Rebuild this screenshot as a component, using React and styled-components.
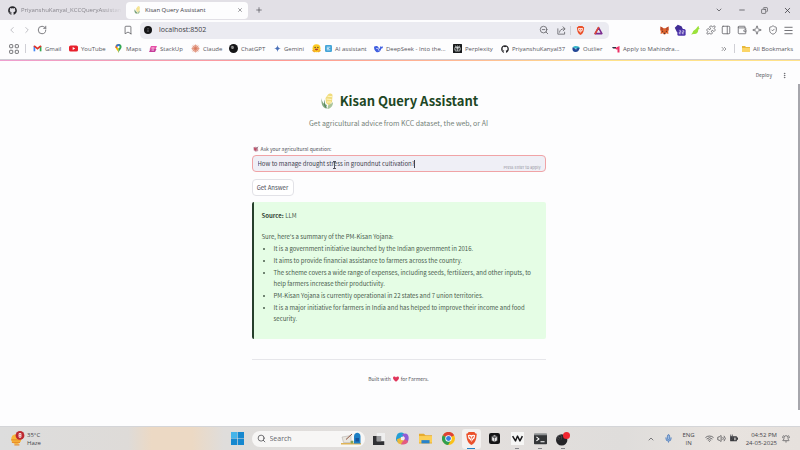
import React from "react";
import styled, { createGlobalStyle, css } from "styled-components";
import {
  BellRing, Bookmark, ChevronDown, ChevronLeft, ChevronRight, ChevronUp, ChevronsRight,
  Copy, Menu, Mic, Minus, MoreVertical, PanelRight, Plus, Puzzle, RotateCw,
  Search, ShieldCheck, Sparkle, Volume2, Wallet, Wifi, X, ZoomOut,
} from "lucide-react";
import { FaGithub } from "react-icons/fa";
import { SiOpenai, SiObsstudio } from "react-icons/si";

const GlobalStyle = createGlobalStyle`
  * { box-sizing: border-box; }
  body { margin: 0; background: #fdfdfe; }
  button, input { font: inherit; color: inherit; }
  button { border: 0; padding: 0; background: none; display: flex; align-items: center; justify-content: center; }
  a { color: inherit; text-decoration: none; }
  svg { display: block; flex: none; }
`;

const Screen = styled.div`
  min-height: 100vh;
  display: flex;
  flex-direction: column;
  font-family: "Open Sans", "Noto Sans", sans-serif;
  font-size: 6px;
  line-height: 10px;
  color: #4a4a50;
`;

/* ---------- browser window ---------- */
const TabStrip = styled.div`
  height: 20px;
  background: #e2e0e6;
  display: flex;
  align-items: center;
  padding-right: 1px;
`;
const Tab = styled.button`
  height: 17px;
  gap: 4px;
  white-space: nowrap;
  ${(p) => p.$active
    ? css`width: 122px; background: #fdfdfe; border-radius: 4px; padding: 0 5px 0 7px; justify-content: flex-start; color: #404046;`
    : css`width: 126px; padding: 0 4px 0 8px; justify-content: flex-start; color: #88868d;`}
`;
const TabTitle = styled.span`
  flex: 1;
  text-align: left;
  ${(p) => p.$fade && css`mask-image: linear-gradient(90deg, #000 80%, transparent);`}
`;
const NewTab = styled.button`width: 22px; height: 16px;`;
const Spacer = styled.div`flex: 1;`;
const WindowButton = styled.button`width: 23px; height: 16px; color: #38383d;`;

const Toolbar = styled.div`
  height: 20px;
  display: flex;
  align-items: center;
  padding: 0 4px 0 5px;
  background: #fdfdfe;
`;
const ToolButton = styled.button`
  width: ${(p) => p.$w || 16}px;
  height: 16px;
  color: ${(p) => p.$color || "#66666b"};
`;
const SaveButton = styled(ToolButton)`margin-left: auto; margin-right: 4px;`;
const NavGroup = styled.div`width: 135px; display: flex; align-items: center;`;
const Address = styled.form`
  flex: 1;
  max-width: 469px;
  height: 17px;
  border-radius: 5px;
  background: #ebebf1;
  display: flex;
  align-items: center;
  padding: 0 2px 0 4px;
`;
const AddressInput = styled.input`
  flex: 1;
  min-width: 0;
  border: 0;
  background: none;
  outline: none;
  padding: 0 0 0 7px;
  font-size: 7px;
  color: #404046;
`;
const Divider = styled.i`width: 1px; height: 9px; background: #cfcfd5;`;
const Extensions = styled.div`margin-left: auto; display: flex; align-items: center;`;

const BookmarkBar = styled.nav`
  height: 20px;
  display: flex;
  align-items: center;
  padding: 0 7px 2px 9px;
  border-bottom: 1px solid #cdccd3;
  white-space: nowrap;
  color: #56565c;
`;
const Apps = styled.button`width: 16px; height: 14px; justify-content: flex-start; color: #66666b;`;
const BookmarkLink = styled.a`
  width: ${(p) => p.$w}px;
  display: flex;
  align-items: center;
  gap: 3px;
`;
const BarStart = styled.div`width: 24px; display: flex; align-items: center;`;
const AllBookmarks = styled.a`display: flex; align-items: center; gap: 3px; margin-left: 7px;`;

/* ---------- page ---------- */
const Page = styled.main`
  flex: 1;
  display: flex;
  flex-direction: column;
  position: relative;
  background: #fdfdfe;
  font-family: "Noto Sans CJK SC", sans-serif;
  padding-right: 3px;
`;
const Rainbow = styled.div`
  height: 1px;
  margin-right: -3px;
  background: linear-gradient(90deg, #ee9fd0, #ff9a94 35%, #ffbd94 60%, #ffe28a 75%);
`;
const PageHeader = styled.header`
  height: 28px;
  display: flex;
  justify-content: flex-end;
  align-items: center;
  gap: 6px;
  padding-right: 7px;
  font-size: 5px;
`;
const Deploy = styled.button`font-size: 5px; color: #55565c;`;
const ScrollThumb = styled.div`
  position: absolute;
  right: 0;
  top: 24px;
  bottom: 16px;
  width: 2px;
  background: #a6a6ac;
`;
const Column = styled.div`
  width: 294px;
  margin: 0 auto;
  display: flex;
  flex-direction: column;
`;
const Title = styled.h1`
  margin: 2px 0 0;
  display: flex;
  align-items: center;
  justify-content: center;
  gap: 5px;
  font-size: 13px;
  line-height: 20px;
  font-weight: 700;
  color: #1e4725;
`;
const Subtitle = styled.p`
  margin: 7px 0 0;
  text-align: center;
  font-size: 7px;
  line-height: 10px;
  color: #758279;
`;
const Label = styled.label`
  margin-top: 16px;
  display: flex;
  align-items: center;
  gap: 2px;
  padding-left: 1px;
  font-size: 5px;
  line-height: 10px;
  color: #505159;
`;
const Field = styled.div`
  position: relative;
  margin-top: 1px;
  height: 17px;
  border: 1px solid #f0a3a6;
  border-radius: 4px;
  background: #efeff6;
  display: flex;
`;
const Question = styled.input`
  flex: 1;
  min-width: 0;
  border: 0;
  outline: none;
  background: none;
  padding: 0 5px;
  font-size: 6px;
  color: #42434f;
`;
const Hint = styled.span`
  position: absolute;
  right: 4px;
  bottom: 0;
  font-size: 4px;
  line-height: 8px;
  color: #9494a0;
`;
const TextCaret = styled.i`
  position: absolute;
  left: 161px;
  top: 4px;
  width: 1px;
  height: 8px;
  background: #42434f;
`;
const Pointer = styled.svg`
  position: absolute;
  left: 79px;
  top: 5px;
`;
const Submit = styled.button`
  align-self: flex-start;
  margin-top: 7px;
  width: 42px;
  height: 17px;
  border: 1px solid #e2e2e7;
  border-radius: 4px;
  background: #fff;
  font-size: 6px;
  color: #4b4c55;
`;
const Answer = styled.section`
  margin-top: 6px;
  padding: 8px 10px 15px 8px;
  border-left: 2px solid #26402b;
  border-radius: 2px;
  background: #e5fde5;
  font-size: 6px;
  line-height: 11px;
  color: #4a5c4d;
`;
const Line = styled.p`margin: 0 0 ${(p) => p.$gap || 0}px;`;
const Strong = styled.b`color: #35483a;`;
const List = styled.ul`
  margin: 0;
  padding: 0 0 0 12px;
  list-style: none;
`;
const Item = styled.li`
  margin-top: 1px;
  position: relative;
  &::before {
    content: "";
    position: absolute;
    left: -11px;
    top: 5px;
    width: 2px;
    height: 2px;
    border-radius: 1px;
    background: #4a5c4d;
  }
`;
const Rule = styled.hr`
  width: 100%;
  margin: 20px 0 14px;
  border: 0;
  border-top: 1px solid #e6e6ea;
`;
const Footer = styled.footer`
  display: flex;
  justify-content: center;
  align-items: center;
  gap: 2px;
  font-size: 5px;
  line-height: 10px;
  color: #55565c;
`;

/* ---------- taskbar ---------- */
const Taskbar = styled.div`
  height: 24px;
  display: grid;
  grid-template-columns: 1fr auto 1fr;
  align-items: center;
  padding: 0 10px;
  border-top: 1px solid #d4d5d8;
  background: linear-gradient(90deg, #dddddd 0%, #dedbd8 16%, #ecd9c4 19%, #ecd9c4 24%, #dfdddb 28%, #e3dfdd 60%, #dfdddb 78%, #e8e3df 90%, #e6e1dd 100%);
  color: #45454a;
`;
const Weather = styled.button`
  justify-self: start;
  gap: 2px;
  text-align: left;
  line-height: 8px;
`;
const Pinned = styled.div`display: flex; align-items: center; margin-left: 5px;`;
const SearchBox = styled.label`
  width: 113px;
  height: 16px;
  margin: 0 3px 0 7px;
  padding: 0 3px 0 5px;
  border-radius: 8px;
  background: #f7f6f5;
  display: flex;
  align-items: center;
  gap: 4px;
`;
const SearchInput = styled.input`
  flex: 1;
  min-width: 0;
  border: 0;
  background: none;
  outline: none;
  padding: 0;
  font-size: 7px;
  &::placeholder { color: #68686d; opacity: 1; }
`;
const TaskButton = styled.button`
  width: 19px;
  height: 20px;
  margin: 0 2px;
  border-radius: 3px;
  position: relative;
  ${(p) => p.$active && css`background: #f3f1f0;`}
  ${(p) => p.$running && css`
    &::after {
      content: "";
      position: absolute;
      bottom: 0;
      left: 50%;
      width: ${p.$active ? 8 : 4}px;
      height: 1px;
      transform: translateX(-50%);
      background: ${p.$active ? "#2380c4" : "#85858a"};
    }
  `}
`;
const StartButton = styled.button`width: 14px; height: 20px;`;
const Tray = styled.div`justify-self: end; display: flex; align-items: center; gap: 3px; line-height: 8px;`;
const TrayText = styled.div`
  text-align: ${(p) => (p.$right ? "right" : "center")};
  margin: ${(p) => (p.$right ? "0 2px 0 5px" : "0 7px 0 6px")};
`;
const TrayIcon = styled.button`height: 16px; margin-right: ${(p) => p.$gap || 0}px;`;

/* ---------- drawings ---------- */
const Svg = ({ s = 9, v = 16, children, ...rest }) => (
  <svg width={s} height={s} viewBox={`0 0 ${v} ${v}`} fill="none" aria-hidden="true" {...rest}>{children}</svg>
);
const Corn = ({ s }) => (
  <Svg s={s}>
    <path d="M9 1.5c1-1.500 4-1.500 4.500.5l-.5 7-3 3.500-3-2.500L6.500 5z" fill="#f0dc7d" />
    <path d="M8.500 3.200l4.500.5M7.500 6l5 .5M8 9h4" stroke="#fff6c4" />
    <path d="M2.500 5c.5 4 2 6 5.500 7l-1 3.500C3.500 14.500 2 11 2.500 5z" fill="#86a983" />
    <path d="M6 6.500c-.5 4 .5 7 2.500 9.200-3-1-4.500-4-2.500-9.200z" fill="#53875c" />
    <path d="M14 9c-1 1.500-3 2-5 3.500L8.500 16c3.500-.5 5.500-3 5.500-7z" fill="#a9c49a" />
  </Svg>
);
const Gmail = () => (
  <Svg s={9}>
    <path d="M1 13V4h3v9z" fill="#4285f4" /><path d="M12 13V4h3v9z" fill="#34a853" />
    <path d="M1 4.500C1 2.500 3 2.200 4 3l4 3.200L12 3c1-.8 3-.5 3 1.500L8 10z" fill="#e0352b" />
  </Svg>
);
const YouTube = () => (
  <Svg s={9}><rect y="2.500" width="16" height="11" rx="3" fill="#e8202c" /><path d="M6.500 5.500v5L11 8z" fill="#fff" /></Svg>
);
const Maps = () => (
  <Svg s={9}>
    <path d="M8 0a5.500 5.500 0 0 0-5.500 5.500C2.500 9 7 11 8 16z" fill="#fbbc04" />
    <path d="M8 0a5.500 5.500 0 0 1 5.500 5.500C13.500 9 9 11 8 16z" fill="#34a853" />
    <path d="M8 0a5.500 5.500 0 0 0-5 3.500L6 6l5-5z" fill="#3a6fd8" /><path d="M3 3.500L2.600 7 6 6z" fill="#ea4335" />
    <circle cx="8" cy="5.500" r="2" fill="#fff" />
  </Svg>
);
const StackUp = () => (
  <Svg s={8}><path d="M4 2h12l-3 7H1z" fill="#e64fa6" /><path d="M3 8h12l-3 6H0z" fill="#c73c9a" /><path d="M5 6h6M5 10h5" stroke="#fff" strokeWidth="1.500" /></Svg>
);
const Claude = () => (
  <Svg s={9}><path d="M8 1v14M1 8h14M3 3l10 10M13 3L3 13M5.300 1.500l5.400 13M10.700 1.500l-5.400 13M1.500 5.300l13 5.400M1.500 10.700l13-5.400" stroke="#d9775b" strokeWidth="1.300" /></Svg>
);
const ChatGPT = () => (
  <Svg s={9}><circle cx="8" cy="8" r="8" fill="#151517" /><SiOpenai x="3" y="3" width="10" height="10" color="#fff" /></Svg>
);
const Gemini = () => <Svg s={7}><path d="M8 0c.6 5 3 7.400 8 8-5 .6-7.400 3-8 8-.6-5-3-7.400-8-8 5-.6 7.400-3 8-8z" fill="#4a70b8" /></Svg>;
const Hug = () => (
  <Svg s={9}><circle cx="8" cy="7.500" r="7" fill="#fcca22" /><circle cx="5.500" cy="6" r="1.100" fill="#3b3020" /><circle cx="10.500" cy="6" r="1.100" fill="#3b3020" /><path d="M5 8.500h6c0 4-6 4-6 0z" fill="#b33a35" /><path d="M1 11l4 3M15 11l-4 3" stroke="#f2a62b" strokeWidth="3" /></Svg>
);
const Assistant = () => (
  <Svg s={7}><rect width="16" height="16" rx="3" fill="#45a5d8" /><path d="M4 5h8M4 8h5M4 11h8" stroke="#e8f6ff" strokeWidth="1.800" /></Svg>
);
const DeepSeek = () => (
  <Svg s={9}><path d="M0 5c3-2 6-2 8 1 1 2 3 2 3-1 0-2 1-1 2 0 1 0 2 0 3-1 0 3-1 4-3 4-1 5-5 8-9 6C1 12 0 9 0 5z" fill="#405fe0" /><path d="M4 8c2-1 4 1 5 4" stroke="#fff" strokeWidth="1.300" /><circle cx="9" cy="8" r="1" fill="#fff" /></Svg>
);
const Perplexity = () => (
  <Svg s={9}><rect width="16" height="16" rx="1" fill="#17191b" /><path d="M8 2.500v11M4.500 3L8 6.500 11.500 3v3.500h-7zM3 6.500h10V11h-2M3 6.500V11h2M8 7l-3 3v3.500L8 11l3 2.500V10z" stroke="#e3e8e8" /></Svg>
);
const Outlier = () => (
  <Svg s={8}><path d="M1 5c3-4 9-4 14-1v4H9z" fill="#39b6c9" /><path d="M1 5c-1 5 1 9 6 9s7-3 8-8l-4-1c0 4-5 5-6 1z" fill="#234796" /></Svg>
);
const Mahindra = () => (
  <Svg s={8}><path d="M0 4h8v3H2z" fill="#2c3546" /><path d="M8 5l7-3v13h-4V8z" fill="#ee3166" /><path d="M4 6h7v4z" fill="#ee3166" /></Svg>
);
const Folder = ({ s = 9 }) => (
  <Svg s={s}><path d="M0 2h6l2 2h8v10H0z" fill="#e8b93c" /><path d="M0 6h16v8H0z" fill="#fbd567" /></Svg>
);
const Lion = ({ s = 9 }) => (
  <Svg s={s}><path d="M4.500 0h7L13 1.700l1.500.3-.5 4c-.7 6-3 8-6 10-3-2-5.300-4-6-10l-.5-4L3 1.700z" fill="#eb512b" /><path d="M3.500 4L6 3.500l2 .5 2-.5 2.500.5-.8 4-1.700 1.300L8 12l-2-2.700L4.300 8z" fill="#fff" /><path d="M5 5l2.300 1L7 8zM11 5L8.700 6 9 8zM8 8v3" fill="#eb512b" stroke="#eb512b" strokeWidth=".6" /></Svg>
);
const Triangle = () => (
  <Svg s={9}><path d="M8 3L2 13.500h12z" stroke="#7b2b8f" strokeWidth="2.800" strokeLinejoin="round" /><path d="M8 3L2 13.500" stroke="#e04934" strokeWidth="2.800" strokeLinecap="round" /></Svg>
);
const ShareArrow = () => (
  <Svg s={9} stroke="currentColor" strokeWidth="1.500" strokeLinecap="round" strokeLinejoin="round"><path d="M1.500 5v9.500h12V11" /><path d="M4.500 11c.5-4 3-6 9-6M10.500 1.500L14.500 5 11 8.500" /></Svg>
);
const Fox = () => (
  <Svg s={9}><path d="M1 1l5 3h4l5-3 .5 6-1 3 .5 4-4-1-2 2H7l-2-2-4 1 .5-4-1-3z" fill="#e1662f" /><path d="M1 1l5 3-1 4-4-1zM15 1l-5 3 1 4 4-1z" fill="#b94a2c" /><path d="M4 8l2 2-2 .5zM12 8l-2 2 2 .5z" fill="#31232a" /><path d="M6.500 12h3l-.5 2H7z" fill="#49383d" /></Svg>
);
const BadgeIcon = () => (
  <Svg s={12}><path d="M1 5l4-4 5 2 2 4-3 4H4z" fill="#402d94" /><rect x="4.500" y="6.500" width="11" height="9" rx="2" fill="#4c32aa" /><path d="M7 9h2v2H7v2h2M11 9h2v2h-2v2h2" stroke="#fff" strokeWidth=".8" /></Svg>
);
const Bird = () => (
  <Svg s={9}><path d="M0 15c2-1 3-4 4-6 2-3 5-3 7-7 1-2 3-2 3-1v3l2 1-3 1c0 6-4 9-8 8z" fill="#9be23b" /></Svg>
);
const AppGrid = () => (
  <Svg s={10} stroke="currentColor" strokeWidth="1.500"><rect x="1" y="1" width="5" height="5" rx="1" /><rect x="10" y="1" width="5" height="5" rx="1" /><rect x="1" y="10" width="5" height="5" rx="1" /><rect x="10" y="10" width="5" height="5" rx="1" /></Svg>
);
const SiteIcon = () => <Svg s={8}><circle cx="8" cy="8" r="8" fill="#151517" /><path d="M8 4v2M8 7v5" stroke="#8c8c92" strokeWidth="1.400" /></Svg>;
const Dart = () => (
  <Svg s={6}><path d="M1 3l6-1 6 2 1 9-7 2-5-3z" fill="#c899aa" /><path d="M3 4l7 3-2 6-5-3z" fill="#c24a61" /><path d="M7 8l7-6" stroke="#7f6875" strokeWidth="2" /></Svg>
);
const Heart = () => <Svg s={6}><path d="M8 15C3 11 0 8 0 5c0-4 6-5 8-1 2-4 8-3 8 1 0 3-3 6-8 10z" fill="#e0355b" /></Svg>;
const Haze = () => (
  <Svg s={15} v={24}><circle cx="10" cy="13" r="8" fill="#f8b739" /><path d="M2 14h15M3 18h13M7 22h8" stroke="#e88f2d" strokeWidth="2" /><circle cx="16" cy="7" r="7" fill="#bd2830" /><path d="M14.500 4h3v6h-3zM14.500 7h3" stroke="#fff" strokeWidth="1.300" /></Svg>
);
const Windows = () => (
  <Svg s={13}><path d="M0 0h7.600v7.600H0zM8.400 0H16v7.600H8.400zM0 8.400h7.600V16H0zM8.400 8.400H16V16H8.400z" fill="#1688cf" /><path d="M0 0h7.600v7.600H0z" fill="#45b4e9" /></Svg>
);
const SearchArt = () => (
  <svg width="22" height="13" viewBox="0 0 44 26" aria-hidden="true"><path d="M2 22h40v3H2z" fill="#dfb457" /><path d="M4 10l18-3v14H7z" fill="#e9e6df" stroke="#aaa7a2" /><path d="M12 15L24 4" stroke="#8d5541" strokeWidth="2" /><path d="M28 23V9c0-10 13-10 13 0v14z" fill="#1d7fc4" /><path d="M31 12h7v7h-7z" fill="#17539b" /><circle cx="24" cy="20" r="3" fill="#83a454" /></svg>
);
const TaskView = () => <Svg s={12}><path d="M5 0h11v11H5z" fill="#efefef" /><path d="M0 4h5v7h10v5H0z" fill="#303033" /><path d="M5 4h6v7H5z" fill="#9b9b9d" /></Svg>;
const Copilot = () => (
  <Svg s={13}><path d="M2 2c3-2 6-2 8 0L7 8 4 13c-5 0-5-6-2-11z" fill="#249ed5" /><path d="M10 2c6-1 7 6 4 11l-4 1 1-7-4-4z" fill="#905cd5" /><path d="M1 9l5-2 4 5c-1 4-6 4-8 1z" fill="#e8b73c" /><path d="M6 15l4-6 5 2c-1 4-5 5-9 4z" fill="#e45b80" /><path d="M6 6h4v4H6z" fill="#f6eaf0" /></Svg>
);
const Explorer = () => <Svg s={13}><path d="M0 2h6l2 2h8v10H0z" fill="#e6ab30" /><path d="M0 5h16v8H0z" fill="#fccf56" /><path d="M3 10h10v4H3z" fill="#2682cc" /></Svg>;
const Chrome = () => (
  <Svg s={13}><circle cx="8" cy="8" r="8" fill="#fbc116" /><path d="M8 8L1 4a8 8 0 0 1 14 0z" fill="#de4136" /><path d="M8 8L1 4a8 8 0 0 0 6.500 12L11 10z" fill="#2f9e50" /><circle cx="8" cy="8" r="3.900" fill="#fff" /><circle cx="8" cy="8" r="3" fill="#397ee3" /></Svg>
);
const Cube = () => <Svg s={11}><rect width="16" height="16" rx="3" fill="#141416" /><path d="M4 5l4-2 4 2v6l-4 2-4-2zM4 5l4 2 4-2M8 7v6" fill="#e9e9eb" stroke="#444" strokeWidth=".8" /></Svg>;
const Wave = () => <Svg s={13}><rect width="16" height="16" fill="#f6f6f5" /><path d="M2 5l3.500 6L8 5l3 6 3-6" stroke="#18181a" strokeWidth="1.800" strokeLinejoin="round" /></Svg>;
const Terminal = () => <Svg s={13}><rect y="2" width="16" height="13" rx="1" fill="#343638" /><path d="M0 2h16v2H0z" fill="#8d9092" /><path d="M3 6l3 2.500L3 11M8 12h5" stroke="#fff" strokeWidth="1.400" /></Svg>;
const Recorder = () => <Svg s={14}><circle cx="6.500" cy="9" r="6.500" fill="#242427" /><SiObsstudio x="1" y="3.500" width="11" height="11" color="#7c7c80" /><circle cx="12" cy="4" r="4" fill="#ef2630" /></Svg>;
const Battery = () => <Svg s={9}><rect x="2" y="4" width="12" height="9" rx="1" fill="#39393d" /><path d="M15 6v4" stroke="#39393d" strokeWidth="2" /><path d="M3 1v5M6 1v5M2 5h5v3l-3 2" stroke="#55555a" strokeWidth="1.500" /><path d="M9 6h3v5H9z" fill="#b4b2b1" /></Svg>;

const bookmarks = [
  [36, <Gmail />, "Gmail"], [45, <YouTube />, "YouTube"], [35, <Maps />, "Maps"],
  [42, <StackUp />, "StackUp"], [38, <Claude />, "Claude"], [45, <ChatGPT />, "ChatGPT"],
  [38, <Gemini />, "Gemini"], [13, <Hug />, ""], [49, <Assistant />, "AI assistant"],
  [79, <DeepSeek />, "DeepSeek - Into the..."], [48, <Perplexity />, "Perplexity"],
  [71, <FaGithub size={8} color="#252529" />, "PriyanshuKanyal37"],
  [40, <Outlier />, "Outlier"], [70, <Mahindra />, "Apply to Mahindra..."],
];
const points = [
  "It is a government initiative launched by the Indian government in 2016.",
  "It aims to provide financial assistance to farmers across the country.",
  "The scheme covers a wide range of expenses, including seeds, fertilizers, and other inputs, to help farmers increase their productivity.",
  "PM-Kisan Yojana is currently operational in 22 states and 7 union territories.",
  "It is a major initiative for farmers in India and has helped to improve their income and food security.",
];

export default function App() {
  return (
    <Screen>
      <GlobalStyle />
      <TabStrip>
        <Tab>
          <FaGithub size={9} color="#252529" />
          <TabTitle $fade>PriyanshuKanyal_KCCQueryAssistan</TabTitle>
        </Tab>
        <Tab $active>
          <Corn s={8} />
          <TabTitle>Kisan Query Assistant</TabTitle>
          <X size={6} />
        </Tab>
        <NewTab aria-label="New tab"><Plus size={8} /></NewTab>
        <Spacer />
        <WindowButton aria-label="Search tabs"><ChevronDown size={8} /></WindowButton>
        <WindowButton aria-label="Minimize"><Minus size={8} /></WindowButton>
        <WindowButton aria-label="Restore"><Copy size={7} transform="scale(-1 1)" /></WindowButton>
        <WindowButton aria-label="Close"><X size={9} /></WindowButton>
      </TabStrip>

      <Toolbar>
        <NavGroup>
          <ToolButton $w={14} $color="#b5b5ba" aria-label="Back"><ChevronLeft size={10} /></ToolButton>
          <ToolButton $w={16} $color="#b5b5ba" aria-label="Forward"><ChevronRight size={10} /></ToolButton>
          <ToolButton $w={14} aria-label="Reload"><RotateCw size={10} /></ToolButton>
          <SaveButton aria-label="Bookmark this page"><Bookmark size={10} /></SaveButton>
        </NavGroup>
        <Address>
          <SiteIcon />
          <AddressInput aria-label="Address" defaultValue="localhost:8502" />
          <ToolButton type="button" $w={18} aria-label="Zoom"><ZoomOut size={10} /></ToolButton>
          <ToolButton type="button" $w={17} aria-label="Share"><ShareArrow /></ToolButton>
          <Divider />
          <ToolButton type="button" $w={18} aria-label="Shields"><Lion /></ToolButton>
          <ToolButton type="button" $w={18} aria-label="Rewards"><Triangle /></ToolButton>
        </Address>
        <Extensions>
          <ToolButton aria-label="Wallet extension"><Fox /></ToolButton>
          <ToolButton aria-label="Extension with 22 items"><BadgeIcon /></ToolButton>
          <ToolButton $w={15} aria-label="Bird extension"><Bird /></ToolButton>
          <ToolButton $w={15} aria-label="Extensions"><Puzzle size={10} /></ToolButton>
          <ToolButton aria-label="Side panel"><PanelRight size={10} /></ToolButton>
          <ToolButton $w={15} aria-label="Wallet"><Wallet size={10} /></ToolButton>
          <ToolButton aria-label="Leo"><Sparkle size={10} /></ToolButton>
          <ToolButton $w={15} aria-label="VPN"><ShieldCheck size={10} /></ToolButton>
          <ToolButton aria-label="Menu"><Menu size={11} /></ToolButton>
        </Extensions>
      </Toolbar>

      <BookmarkBar>
        <BarStart><Apps aria-label="Apps"><AppGrid /></Apps><Divider /></BarStart>
        {bookmarks.map(([w, icon, text], i) => (
          <BookmarkLink key={i} href="#" $w={w} aria-label={text || "Hugging Face"}>{icon}{text}</BookmarkLink>
        ))}
        <Spacer />
        <ToolButton $w={20} aria-label="More bookmarks"><ChevronsRight size={8} /></ToolButton>
        <Divider />
        <AllBookmarks href="#"><Folder s={8} />All Bookmarks</AllBookmarks>
      </BookmarkBar>

      <Page>
        <Rainbow />
        <PageHeader>
          <Deploy>Deploy</Deploy>
          <ToolButton $w={12} aria-label="Page menu"><MoreVertical size={7} strokeWidth={3} /></ToolButton>
        </PageHeader>
        <ScrollThumb />
        <Column>
          <Title><Corn s={16} />Kisan Query Assistant</Title>
          <Subtitle>Get agricultural advice from KCC dataset, the web, or AI</Subtitle>
          <Label htmlFor="question"><Dart />Ask your agricultural question:</Label>
          <Field>
            <Question id="question" defaultValue="How to manage drought stress in groundnut cultivation?" />
            <TextCaret />
            <Pointer width="5" height="8" viewBox="0 0 5 8" fill="none" stroke="#55555f" aria-hidden="true">
              <path d="M1 .5h3M2.500 .5v7M1 7.500h3" />
            </Pointer>
            <Hint>Press Enter to apply</Hint>
          </Field>
          <Submit>Get Answer</Submit>
          <Answer>
            <Line $gap={10}><Strong>Source:</Strong> LLM</Line>
            <Line>Sure, here's a summary of the PM-Kisan Yojana:</Line>
            <List>{points.map((p) => <Item key={p}>{p}</Item>)}</List>
          </Answer>
          <Rule />
          <Footer>Built with <Heart /> for Farmers.</Footer>
        </Column>
      </Page>

      <Taskbar>
        <Weather><Haze /><span>35°C<br />Haze</span></Weather>
        <Pinned>
          <StartButton aria-label="Start"><Windows /></StartButton>
          <SearchBox>
            <Search size={9} />
            <SearchInput placeholder="Search" aria-label="Search" />
            <SearchArt />
          </SearchBox>
          <TaskButton aria-label="Task view"><TaskView /></TaskButton>
          <TaskButton aria-label="Copilot"><Copilot /></TaskButton>
          <TaskButton aria-label="File Explorer"><Explorer /></TaskButton>
          <TaskButton aria-label="Chrome"><Chrome /></TaskButton>
          <TaskButton $active $running aria-label="Brave"><Lion s={13} /></TaskButton>
          <TaskButton aria-label="Cursor"><Cube /></TaskButton>
          <TaskButton $running aria-label="Windsurf"><Wave /></TaskButton>
          <TaskButton $running aria-label="Terminal"><Terminal /></TaskButton>
          <TaskButton $running aria-label="OBS Studio"><Recorder /></TaskButton>
        </Pinned>
        <Tray>
          <TrayIcon $gap={6} aria-label="Hidden icons"><ChevronUp size={8} /></TrayIcon>
          <TrayIcon aria-label="Microphone"><Mic size={9} color="#4c78b5" fill="#9dbbe0" /></TrayIcon>
          <TrayText>ENG<br />IN</TrayText>
          <TrayIcon aria-label="Network"><Wifi size={9} /></TrayIcon>
          <TrayIcon aria-label="Volume"><Volume2 size={9} /></TrayIcon>
          <TrayIcon aria-label="Battery"><Battery /></TrayIcon>
          <TrayText $right>04:52 PM<br />24-05-2025</TrayText>
          <TrayIcon aria-label="Notifications"><BellRing size={8} /></TrayIcon>
        </Tray>
      </Taskbar>
    </Screen>
  );
}
